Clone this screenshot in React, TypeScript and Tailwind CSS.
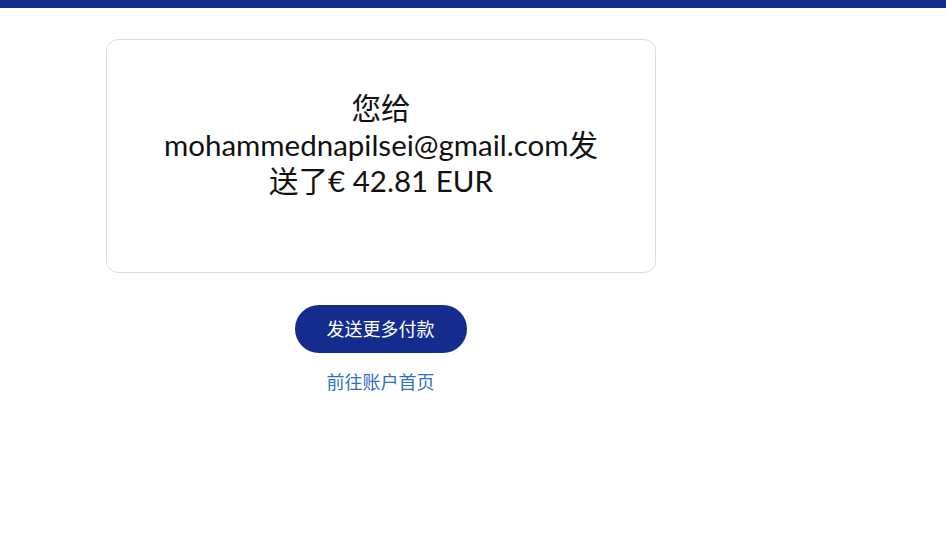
import React from "react";

export default function App() {
  return (
    <div className="min-h-[557px] w-[946px] bg-white" style={{ fontFamily: '"Lato", "Noto Sans CJK SC", sans-serif' }}>
      <div className="h-2 bg-[#142c8e]" />
      <div className="pl-[106px] pt-[31px] w-[655px]">
        <div className="h-[234px] w-[550px] rounded-[12px] border border-[#dcdcdc] flex items-center justify-center px-[30px]">
          <p className="text-[29.5px] leading-[36.5px] text-[#111] text-center mb-[22px]">
            您给
            <br />
            mohammednapilsei@gmail.com发
            <br />
            送了€ 42.81 EUR
          </p>
        </div>
        <div className="flex flex-col items-center mt-[32px]">
          <button className="h-[48px] w-[172px] rounded-full bg-[#142c8e] text-white text-[18px]">
            发送更多付款
          </button>
          <a className="mt-[17px] text-[18px] text-[#2f6fc8] leading-[24px]">前往账户首页</a>
        </div>
      </div>
    </div>
  );
}
